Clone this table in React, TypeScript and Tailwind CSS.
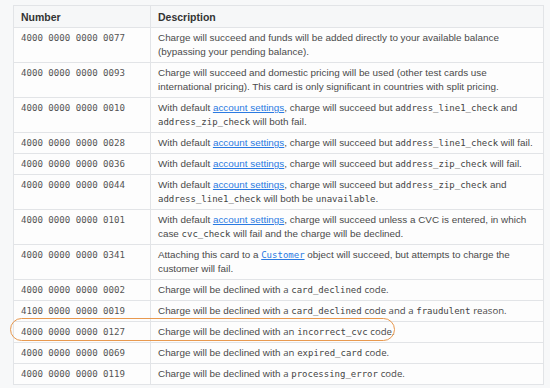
import React from "react";

const C = ({ children }: { children: React.ReactNode }) => (
  <code className="font-['DejaVu_Sans_Mono',monospace] text-[9px] text-[#444]">{children}</code>
);
const L = ({ children }: { children: React.ReactNode }) => (
  <a className="text-[#2a7ae2] underline">{children}</a>
);
const O = ({ children }: { children: React.ReactNode }) => (
  <span className="font-['Open_Sans',sans-serif] text-[9.6px]">{children}</span>
);

type Row = { n: string; d: React.ReactNode; hl?: boolean };

const rows: Row[] = [
  { n: "4000 0000 0000 0077", d: <>Charge will succeed and funds will be added directly to your available balance (bypassing your pending balance).</> },
  { n: "4000 0000 0000 0093", d: <>Charge will succeed and domestic pricing will be used (other test cards use international pricing). This card is only significant in countries with split pricing.</> },
  { n: "4000 0000 0000 0010", d: <>With default <L>account settings</L>, charge will succeed but <C>address_line1_check</C> and <C>address_zip_check</C> will both fail.</> },
  { n: "4000 0000 0000 0028", d: <>With default <L>account settings</L>, charge will succeed but <C>address_line1_check</C> will fail.</> },
  { n: "4000 0000 0000 0036", d: <>With default <L>account settings</L>, charge will succeed but <C>address_zip_check</C> will fail.</> },
  { n: "4000 0000 0000 0044", d: <>With default <L>account settings</L>, charge will succeed but <C>address_zip_check</C> and <C>address_line1_check</C> will both be <C>unavailable</C>.</> },
  { n: "4000 0000 0000 0101", d: <>With default <L>account settings</L>, charge will succeed unless a CVC is entered, in which case <C>cvc_check</C> will fail and the charge will be declined.</> },
  { n: "4000 0000 0000 0341", d: <>Attaching this card to a <a className="text-[#2a7ae2] underline font-['DejaVu_Sans_Mono',monospace] text-[9px]">Customer</a> object will succeed, but attempts to charge the customer will fail.</> },
  { n: "4000 0000 0000 0002", d: <>Charge will be declined with <O>a</O> <C>card_declined</C> <O>code.</O></> },
  { n: "4100 0000 0000 0019", d: <>Charge will be declined with <O>a</O> <C>card_declined</C> <O>code and a</O> <C>fraudulent</C> <O>reason.</O></> },
  { n: "4000 0000 0000 0127", d: <>Charge will be declined with <O>an</O> <C>incorrect_cvc</C> <O>code.</O></>, hl: true },
  { n: "4000 0000 0000 0069", d: <>Charge will be declined with <O>an</O> <C>expired_card</C> <O>code.</O></> },
  { n: "4000 0000 0000 0119", d: <>Charge will be declined with <O>a</O> <C>processing_error</C> <O>code.</O></> },
];

export default function App() {
  return (
    <div className="w-[550px] h-[388px] bg-[#f7f8f9] pt-[5px] pl-[13px] overflow-hidden">
      <div className="relative w-[531px]">
        <table className="w-[531px] border-collapse bg-[#fdfdfd] text-[9.9px] leading-[14px] text-[#4a4a4a] font-['Liberation_Sans',Arial,sans-serif]">
          <thead>
            <tr className="bg-[#f6f7f8]">
              <th className="w-[137px] h-[22px] border border-[#e2e4e7] px-[7px] py-0 text-left text-[10.5px] font-bold text-[#333]">Number</th>
              <th className="h-[22px] border border-[#e2e4e7] px-[7px] py-0 text-left text-[10.5px] font-bold text-[#333]">Description</th>
            </tr>
          </thead>
          <tbody>
            {rows.map((r) => (
              <tr key={r.n}>
                <td className="border border-[#e2e4e7] px-[7px] py-[3px] align-top whitespace-nowrap font-['DejaVu_Sans_Mono',monospace] text-[9.1px] text-[#555]">
                  {r.n}
                </td>
                <td className="border border-[#e2e4e7] px-[7px] py-[3px] align-top">{r.d}</td>
              </tr>
            ))}
          </tbody>
        </table>
        <div className="absolute left-[-3px] top-[313px] h-[23px] w-[385px] rounded-full border-[1.5px] border-[#e8994f]" />
      </div>
    </div>
  );
}
